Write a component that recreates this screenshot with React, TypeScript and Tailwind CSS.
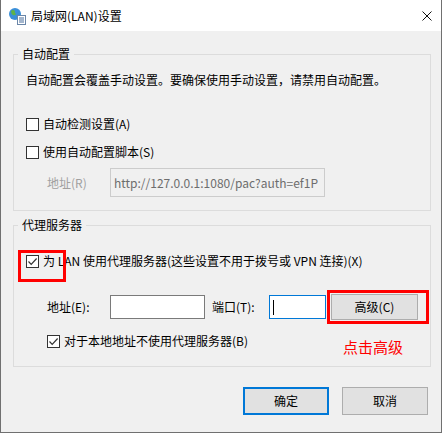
import React from "react";

const FONT = {
  fontFamily: '"Noto Sans CJK SC", "Noto Sans", sans-serif',
};

function CheckBox({ checked }: { checked?: boolean }) {
  return (
    <span className="flex h-[13px] w-[13px] shrink-0 items-center justify-center border border-[#333333] bg-white">
      {checked && (
        <svg width="11" height="11" viewBox="0 0 11 11">
          <path d="M1.5 5.5 L4.2 8.3 L9.6 2.5" fill="none" stroke="#333333" strokeWidth="1.2" />
        </svg>
      )}
    </span>
  );
}

function CheckRow({ checked, label, className }: { checked?: boolean; label: string; className?: string }) {
  return (
    <div className={`flex h-[16px] items-center gap-[4px] ${className ?? ""}`}>
      <CheckBox checked={checked} />
      <span className="leading-[16px] whitespace-nowrap">{label}</span>
    </div>
  );
}

function WinIcon() {
  return (
    <svg width="18" height="18" viewBox="0 0 18 18">
      <circle cx="7" cy="7" r="6" fill="#3a8fd9" />
      <path d="M3 4 Q5 2 7 4 Q6 6 8 7 Q7 9 5 8 Q3 7 3 4Z" fill="#5fb346" />
      <path d="M9 9 Q11 8 12 10 Q10 12 9 9Z" fill="#5fb346" />
      <rect x="9.5" y="8.5" width="8" height="9" fill="#ffffff" stroke="#6a86a8" />
      <rect x="11" y="10.5" width="5" height="1" fill="#4a6f9c" />
      <rect x="11" y="12.5" width="5" height="1" fill="#4a6f9c" />
      <rect x="11" y="14.5" width="5" height="1" fill="#4a6f9c" />
    </svg>
  );
}

export default function App() {
  return (
    <div className="relative h-[433px] w-[442px] border-x border-b border-[#707070] bg-[#f0f0f0] text-[12px] text-black" style={FONT}>
      {/* title bar */}
      <div className="flex h-[31px] items-center bg-white">
        <div className="ml-[7px] mt-[1px]">
          <WinIcon />
        </div>
        <span className="ml-[5px] leading-[16px]">局域网(LAN)设置</span>
        <svg className="ml-auto mr-[9px]" width="10" height="10" viewBox="0 0 10 10">
          <path d="M0.5 0.5 L9.5 9.5 M9.5 0.5 L0.5 9.5" stroke="#111111" strokeWidth="1" />
        </svg>
      </div>

      <div className="pt-[15px]">
        {/* 自动配置 */}
        <fieldset className="ml-[12px] w-[418px] border border-[#dcdcdc] pb-[13px]">
          <legend className="ml-[4px] px-[4px] leading-[16px]">自动配置</legend>
          <div className="pl-[12px]">
            <p className="mt-[10px] leading-[16px] whitespace-nowrap">
              自动配置会覆盖手动设置。要确保使用手动设置，请禁用自动配置。
            </p>
            <CheckRow className="mt-[28px]" label="自动检测设置(A)" />
            <CheckRow className="mt-[12px]" label="使用自动配置脚本(S)" />
            <div className="mt-[8px] flex items-center">
              <span className="ml-[21px] w-[63px] text-[#a0a0a0] leading-[16px]">地址(R)</span>
              <div className="flex h-[29px] w-[215px] items-center overflow-hidden whitespace-nowrap border border-[#cccccc] bg-[#f0f0f0] pl-[3px] text-[#6d6d6d]">
                http://127.0.0.1:1080/pac?auth=ef1P
              </div>
            </div>
          </div>
        </fieldset>

        {/* 代理服务器 */}
        <fieldset className="ml-[12px] mt-[6px] w-[418px] border border-[#dcdcdc] pb-[17px]">
          <legend className="ml-[4px] px-[4px] leading-[16px]">代理服务器</legend>
          <div className="pl-[12px]">
            <CheckRow className="mt-[20px]" checked label="为 LAN 使用代理服务器(这些设置不用于拨号或 VPN 连接)(X)" />
            <div className="mt-[25px] flex items-center">
              <span className="ml-[21px] w-[63px] leading-[16px]">地址(E):</span>
              <div className="h-[24px] w-[95px] border border-[#7a7a7a] bg-white" />
              <span className="ml-[7px] w-[57px] leading-[16px]">端口(T):</span>
              <div className="flex h-[24px] w-[57px] items-center border border-[#0078d7] bg-white pl-[3px]">
                <span className="h-[15px] w-[1px] bg-black" />
              </div>
              <div className="ml-[5px] flex h-[26px] w-[87px] items-center justify-center border border-[#adadad] bg-[#e1e1e1] leading-[16px]">
                高级(C)
              </div>
            </div>
            <CheckRow className="mt-[13px] ml-[21px]" checked label="对于本地地址不使用代理服务器(B)" />
          </div>
        </fieldset>

        {/* buttons */}
        <div className="mt-[20px] flex justify-end gap-[13px] pr-[13px]">
          <div className="flex h-[28px] w-[86px] items-center justify-center border-2 border-[#0078d7] bg-[#e1e1e1] leading-[16px]">
            确定
          </div>
          <div className="flex h-[28px] w-[86px] items-center justify-center border border-[#adadad] bg-[#e1e1e1] leading-[16px]">
            取消
          </div>
        </div>
      </div>

      {/* annotations */}
      <div className="absolute left-[17px] top-[250px] h-[32px] w-[48px] border-[3px] border-[#ff0000]" />
      <div className="absolute left-[326px] top-[290px] h-[34px] w-[102px] border-[3px] border-[#ff0000]" />
      <span className="absolute left-[342px] top-[337px] text-[15px] leading-[20px] text-[#ff0000]">点击高级</span>
    </div>
  );
}
